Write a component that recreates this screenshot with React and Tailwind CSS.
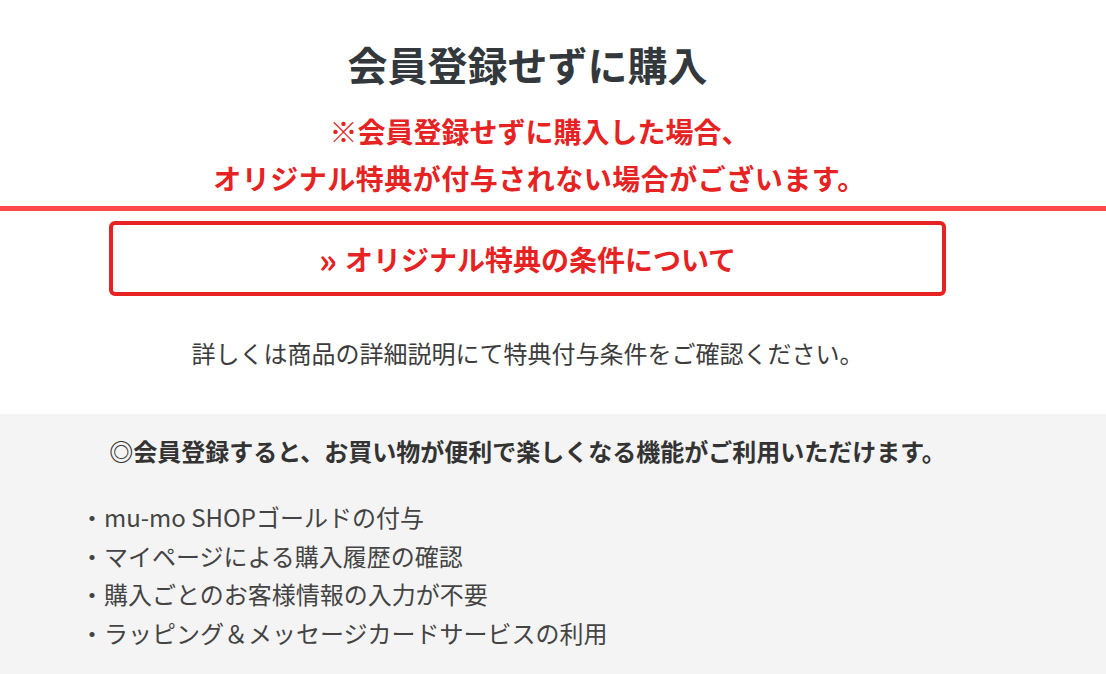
import React from 'react';

const benefits = [
  'mu-mo SHOPゴールドの付与',
  'マイページによる購入履歴の確認',
  '購入ごとのお客様情報の入力が不要',
  'ラッピング＆メッセージカードサービスの利用',
];

export default function App() {
  return (
    <div className="w-[1106px] h-[674px] overflow-hidden bg-white font-['Noto_Sans_CJK_JP','Noto_Sans',sans-serif]">
      <div className="w-[1055px] pt-[36px]">
        <h1 className="text-center text-[40px] leading-[56px] font-bold text-[#33383c]">会員登録せずに購入</h1>
        <div className="mt-[16px] pl-[24px] text-center text-[28px] leading-[47px] font-bold text-[#e62222]">
          <p>※会員登録せずに購入した場合、</p>
          <p className="tracking-[0.5px]">オリジナル特典が付与されない場合がございます。</p>
        </div>
      </div>
      <div className="mt-[4px] h-[5px] bg-[#ff4b4b]" />
      <div className="w-[1055px] pt-[10px]">
        <a className="mx-[109px] flex h-[75px] items-center justify-center rounded-[6px] border-[4px] border-[#e62222] text-[28px] font-bold text-[#e62222]">
          <span className="mr-[8px] text-[34px] leading-none">»</span>オリジナル特典の条件について
        </a>
        <p className="mt-[40px] text-center text-[24px] leading-[34px] text-[#3c3c3c]">
          詳しくは商品の詳細説明にて特典付与条件をご確認ください。
        </p>
      </div>
      <div className="mt-[44px] h-[300px] bg-[#f4f4f4]">
        <div className="w-[1055px] pt-[20px]">
          <p className="text-center text-[24px] leading-[34px] font-bold text-[#333]">
            ◎会員登録すると、お買い物が便利で楽しくなる機能がご利用いただけます。
          </p>
          <ul className="mt-[30px] pl-[80px] text-[24px] leading-[38.5px] text-[#444]">
            {benefits.map((b) => (
              <li key={b}>・{b}</li>
            ))}
          </ul>
        </div>
      </div>
    </div>
  );
}
